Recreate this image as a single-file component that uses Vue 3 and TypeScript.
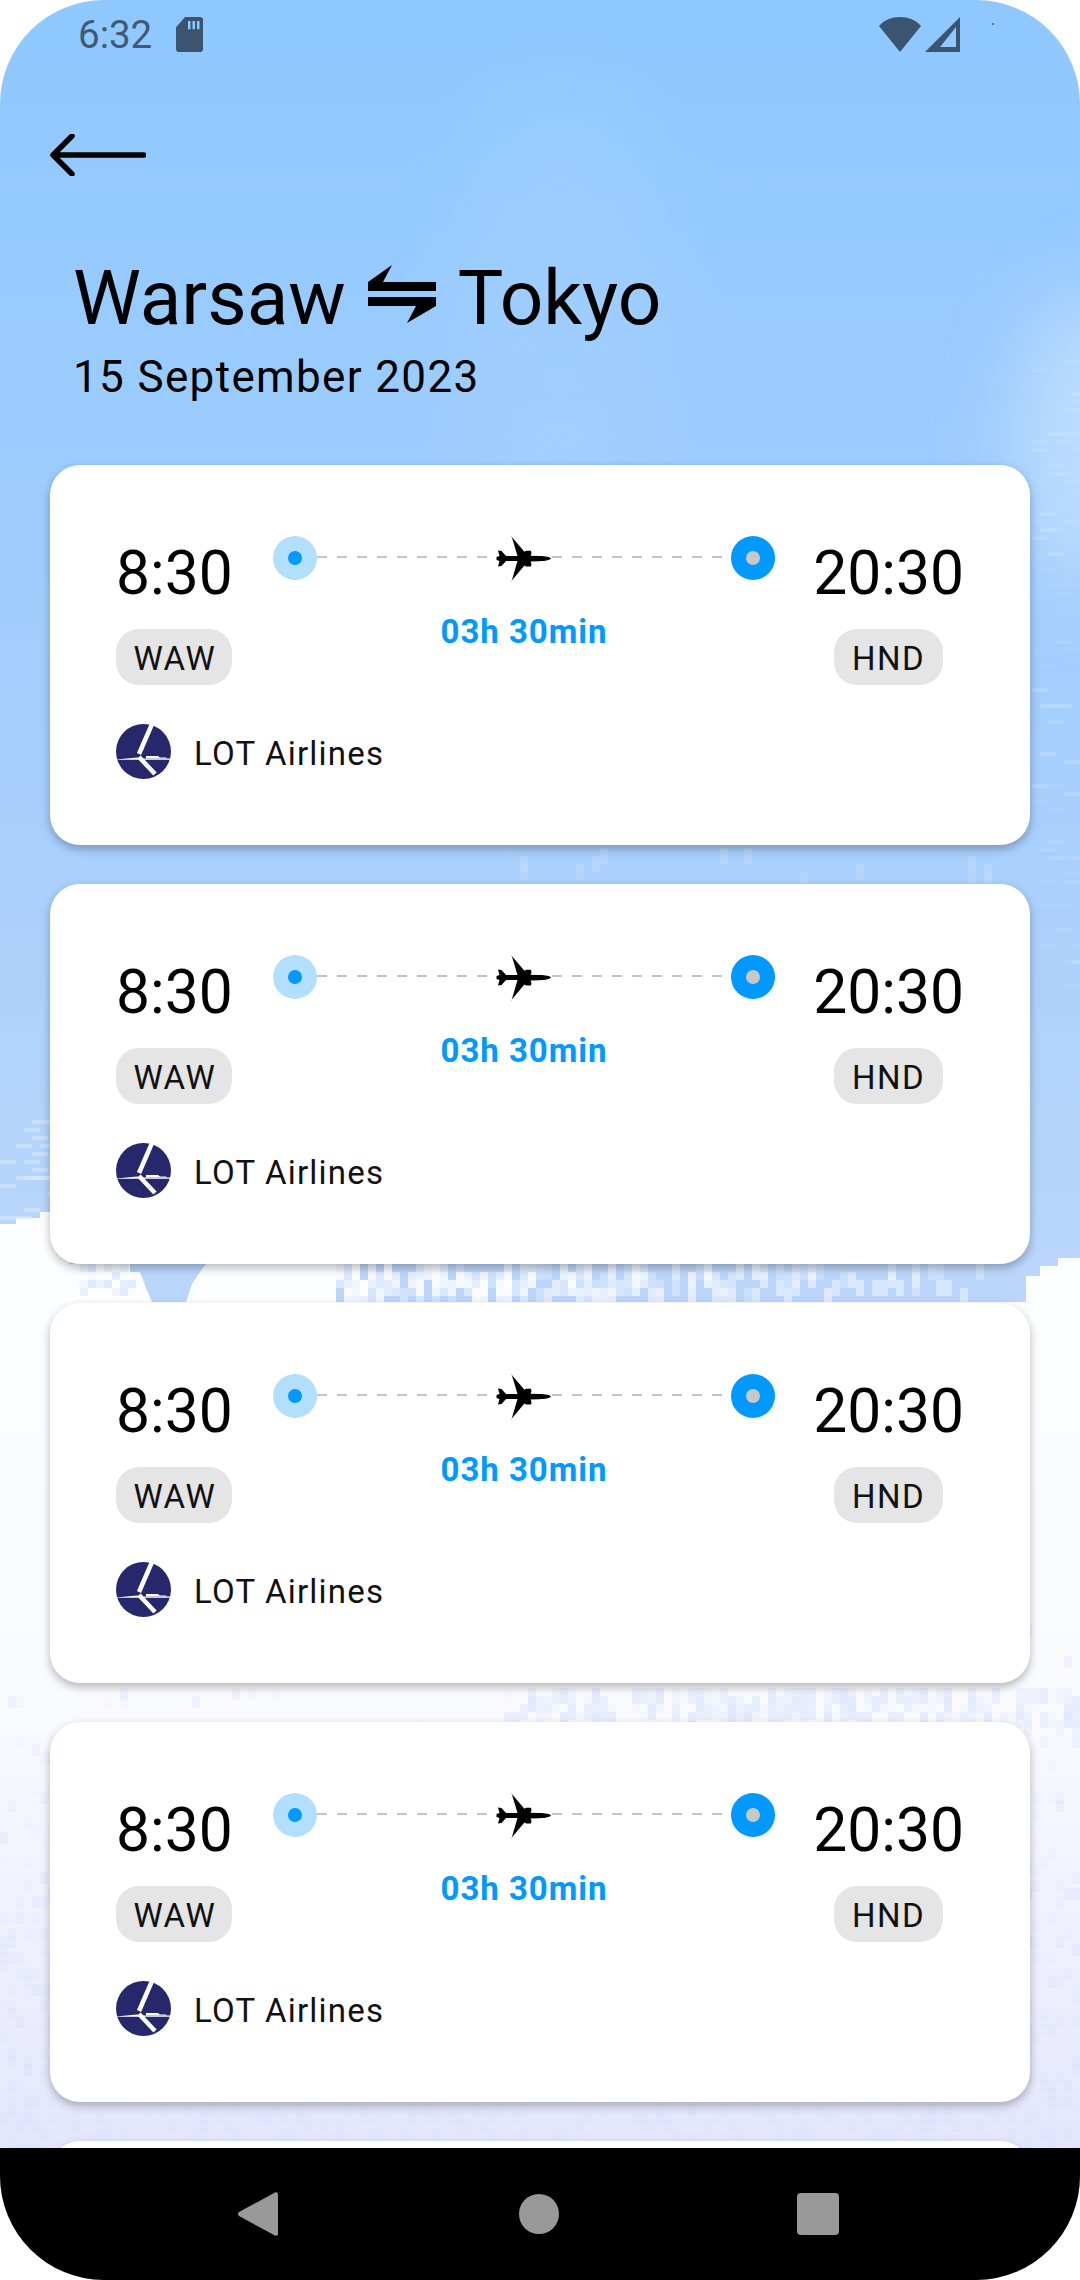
<template>
  <div class="phone">
    <svg class="sky" width="1080" height="2280" viewBox="0 0 1080 2280" aria-hidden="true">
      <defs>
        <linearGradient id="skyFill" x1="0" y1="0" x2="0" y2="1">
          <stop offset="0" stop-color="#8ec8ff" />
          <stop offset="0.36" stop-color="#a8cffc" />
          <stop offset="0.56" stop-color="#bad6fb" />
        </linearGradient>
        <linearGradient id="cloudFill" gradientUnits="userSpaceOnUse" x1="0" y1="1220" x2="0" y2="2150">
          <stop offset="0" stop-color="#fdfeff" />
          <stop offset="0.52" stop-color="#fafbff" />
          <stop offset="1" stop-color="#e4e7fd" />
        </linearGradient>
        <filter id="soft" x="-100%" y="-100%" width="300%" height="300%"><feGaussianBlur stdDeviation="40" /></filter>
      </defs>
      <rect width="1080" height="2280" fill="url(#skyFill)" />
      <ellipse cx="1090" cy="440" rx="70" ry="150" fill="#d4e8ff" opacity="0.6" filter="url(#soft)" />
      <ellipse cx="560" cy="300" rx="110" ry="220" fill="#b9dcff" opacity="0.18" filter="url(#soft)" />
      <polygon fill="url(#cloudFill)" points="0,1224 16,1224 16,1218 40,1218 40,1212 70,1212 70,1264 130,1264 130,1272 140,1272 146,1288 152,1302 186,1302 192,1284 200,1272 206,1264 1016,1264 1016,1302 1026,1302 1026,1276 1040,1276 1040,1266 1058,1266 1058,1258 1080,1258 1080,2280 0,2280" />
      <rect x="206" y="1264" width="814" height="38" fill="#bcd6fb" />
      <rect x="206" y="1264" width="130" height="38" fill="#fdfeff" />
      <rect v-for="(c, i) in cells" :key="i" :x="c.x" :y="c.y" :width="c.w" :height="c.h" :fill="c.fill" :opacity="c.o" />
    </svg>

    <main class="screen">
      <header class="status-bar">
        <div class="status-left">
          <span class="clock">6:32</span>
          <svg width="27" height="35" viewBox="0 0 27 34" preserveAspectRatio="none">
            <path fill="#3b546f" d="M9 0h15a3 3 0 0 1 3 3v28a3 3 0 0 1-3 3H3a3 3 0 0 1-3-3V10z" />
            <path fill="#8ec8ff" d="M12 4h2.5v8H12zM16.5 4H19v8h-2.5zM21 4h2.5v8H21z" />
          </svg>
        </div>
        <div class="status-right">
          <svg width="42" height="35" viewBox="0 0 42 35">
            <path fill="#3b546f" d="M21 35 0 9C5 3 13 0 21 0s16 3 21 9z" />
          </svg>
          <svg width="35" height="35" viewBox="0 0 35 35">
            <path fill="#3b546f" fill-rule="evenodd" d="M35 0v35H0zM31 10 15 30h16z" />
          </svg>
          <i class="tick"></i>
        </div>
      </header>

      <button class="back" type="button" aria-label="Back">
        <svg width="96" height="42" viewBox="0 0 96 42">
          <path d="M94 21H4M22 2 3 21l19 19" fill="none" stroke="#000" stroke-width="5.500" stroke-linecap="round" stroke-linejoin="round" />
        </svg>
      </button>

      <h1 class="title">
        <span>Warsaw</span>
        <svg class="swap" width="68" height="58" viewBox="0 0 68 58">
          <path d="M0 17 24 0 15 17H68V26H0zM68 41 39 58 48 41H0V32H68z" fill="#000" />
        </svg>
        <span>Tokyo</span>
      </h1>
      <p class="date">15 September 2023</p>

      <section class="list">
        <article v-for="f in flights" :key="f.id" class="card">
          <div class="route">
            <div class="stop">
              <div class="time">{{ f.depart }}</div>
              <div class="code">{{ f.from }}</div>
            </div>
            <div class="track">
              <div class="line">
                <span class="dot dot-start"><i></i></span>
                <span class="dash"></span>
                <svg class="plane" width="56" height="48" viewBox="15 15 56 48">
                  <path fill="#000" d="M70 38.5C69 37 65 36.2 58 36L49.5 35.7 50.5 33.5 50 30.8H45L43.4 31.8 30 16H30.5L36.5 36H25L20.5 31 17 30.500 18.500 36 15.500 37V40L18.500 41 17 46.500 20.500 46 25 41H36.500L30.500 61.500H30L43.400 45.500 45 46.500H50L50.500 44 49.500 41.500 58 41.200C65 41 69 40 70 38.500Z" />
                </svg>
                <span class="dash"></span>
                <span class="dot dot-end"><i></i></span>
              </div>
              <div class="duration">{{ f.duration }}</div>
            </div>
            <div class="stop">
              <div class="time">{{ f.arrive }}</div>
              <div class="code">{{ f.to }}</div>
            </div>
          </div>
          <div class="airline">
            <svg width="55" height="55" viewBox="0 0 55 55">
              <circle cx="27.500" cy="27.500" r="27.500" fill="#27276b" />
              <path d="M36 0 23 30" stroke="#fff" stroke-width="4.500" fill="none" />
              <path d="M23 33 39 50" stroke="#fff" stroke-width="4.500" fill="none" />
              <path d="M0 35.500 21 33.500 27 34.500H55V35.700H0z" fill="#fff" />
              <path d="M30 32H42L44 33.500H50L51 34.500H30z" fill="#fff" />
            </svg>
            <span>{{ f.airline }}</span>
          </div>
        </article>
      </section>
    </main>

    <nav class="nav-bar">
      <svg width="40" height="46" viewBox="0 0 40 46"><path fill="#999" d="M37 1.500 1 21a2.500 2.500 0 0 0 0 4L37 44.500c1.500.8 3-.2 3-2V3.500c0-1.800-1.500-2.800-3-2z" /></svg>
      <span class="nav-circle"></span>
      <span class="nav-square"></span>
    </nav>
  </div>
</template>

<script setup lang="ts">
interface Flight {
  id: number
  depart: string
  arrive: string
  from: string
  to: string
  duration: string
  airline: string
}

interface Cell {
  x: number
  y: number
  w: number
  h: number
  fill: string
  o: number
}

const flights: Flight[] = [1, 2, 3, 4, 5].map((id) => ({
  id,
  depart: '8:30',
  arrive: '20:30',
  from: 'WAW',
  to: 'HND',
  duration: '03h 30min',
  airline: 'LOT Airlines',
}))

// small seeded generator so the sky texture stays the same on every load
let seed = 7321
const rnd = () => {
  seed = (seed * 16807) % 2147483647
  return seed / 2147483647
}

const hiddenByCard = (x: number, y: number) => {
  if (x < 58 || x > 1016) return false
  return [465, 884, 1303, 1722, 2141].some((top) => y >= top - 8 && y < top + 380)
}

const cells: Cell[] = []
for (let y = 360; y < 2148; y += 8) {
  for (let x = 0; x < 1080; x += 8) {
    if (hiddenByCard(x, y)) continue
    const r = rnd()
    if (y < 1000 && x > 1024 && r < 0.16) {
      cells.push({ x, y, w: 16, h: 4, fill: '#cfe5ff', o: 0.4 * rnd() })
    } else if (y >= 845 && y < 884 && x > 480 && r < 0.05) {
      cells.push({ x, y, w: 8, h: 16, fill: '#cfe2ff', o: 0.3 })
    } else if (y >= 1120 && y < 1220 && x < 50 && r < 0.18) {
      cells.push({ x, y, w: 16, h: 4, fill: '#e6f0ff', o: 0.4 })
    } else if (y >= 1264 && y < 1302) {
      if (x >= 336 && x < 1016 && r < 0.75 - (x - 336) / 1100) {
        cells.push({ x, y, w: 8, h: 16, fill: '#ffffff', o: 0.2 + rnd() * (0.85 - (x - 336) / 950) })
      } else if (x >= 70 && x < 136 && r < 0.5) {
        cells.push({ x, y, w: 8, h: 8, fill: '#c8dcfb', o: 0.6 * rnd() })
      }
    } else if (y >= 1683 && y < 1722 && x > 500 && r < 0.6) {
      cells.push({ x, y, w: 8, h: 16, fill: '#dfe7fc', o: rnd() * 0.8 })
    } else if (y >= 1600 && r < (y - 1600) / 1400) {
      cells.push({ x, y, w: 8, h: 12, fill: '#d7ddfb', o: rnd() * 0.35 })
    }
  }
}
</script>

<style>
html,
body {
  margin: 0;
  background: #fff;
}
</style>

<style scoped>
.phone {
  position: relative;
  width: 1080px;
  height: 2280px;
  display: flex;
  flex-direction: column;
  border-radius: 104px;
  overflow: hidden;
  font-family: Roboto, "Liberation Sans", sans-serif;
  color: #000;
}

.sky {
  position: absolute;
  inset: 0;
}

.screen {
  position: relative;
  flex: 1;
  min-height: 0;
  overflow: hidden;
  display: flex;
  flex-direction: column;
}

.status-bar {
  height: 70px;
  flex: none;
  display: flex;
  justify-content: space-between;
  padding: 17px 86px 0 78px;
  box-sizing: border-box;
}

.status-left {
  display: flex;
  align-items: flex-start;
  gap: 24px;
}

.status-right {
  display: flex;
  gap: 4px;
  align-items: flex-start;
}

.tick {
  width: 2px;
  height: 2px;
  margin: 6px 0 0 28px;
  background: #3b546f;
  opacity: 0.7;
}

.clock {
  font-size: 38.500px;
  line-height: 36px;
  color: #3f5a76;
}

.back {
  align-self: flex-start;
  margin: 64px 0 0 50px;
  padding: 0;
  border: 0;
  background: none;
  line-height: 0;
}

.title {
  margin: 78px 0 0 73px;
  display: flex;
  align-items: center;
  gap: 22px;
  font-size: 76.500px;
  font-weight: 400;
  line-height: 88px;
}

.swap {
  margin-top: -8px;
}

.date {
  margin: 10px 0 0 73px;
  font-size: 44px;
  line-height: 50px;
  letter-spacing: 1.350px;
}

.list {
  margin-top: 63px;
  padding: 0 50px;
  display: flex;
  flex-direction: column;
  gap: 39px;
}

.card {
  flex: none;
  height: 380px;
  box-sizing: border-box;
  padding: 76px 66px 0;
  background: #fff;
  border-radius: 30px;
  box-shadow: 0 4px 10px rgba(0, 0, 0, 0.28);
}

.route {
  display: flex;
  justify-content: space-between;
  align-items: flex-start;
}

.stop {
  display: flex;
  flex-direction: column;
  align-items: center;
}

.time {
  font-size: 60.500px;
  line-height: 66px;
}

.code {
  margin-top: 22px;
  padding: 0 18px;
  height: 56px;
  border-radius: 23px;
  background: #e5e5e5;
  font-size: 33px;
  line-height: 59px;
  letter-spacing: 1.500px;
  color: #111;
}

.stop:first-child .code {
  padding: 0 16px 0 17px;
}

.track {
  flex: 1;
  margin: -5px 38px 0 40px;
  display: flex;
  flex-direction: column;
  align-items: center;
}

.line {
  width: 100%;
  display: flex;
  align-items: flex-start;
}

.dot {
  flex: none;
  width: 44px;
  height: 44px;
  border-radius: 50%;
  display: flex;
  align-items: center;
  justify-content: center;
}

.dot i {
  width: 14px;
  height: 14px;
  border-radius: 50%;
}

.dot-start {
  background: #b3dfff;
}

.dot-start i {
  background: #0099ff;
}

.dot-end {
  background: #0099ff;
}

.dot-end i {
  background: #c8c8c8;
}

.dash {
  flex: 1;
  height: 2px;
  margin-top: 20px;
  background: repeating-linear-gradient(90deg, #c4c4c4 0 10px, transparent 10px 20px);
}

.plane {
  flex: none;
  margin-top: -1px;
}

.duration {
  margin-top: 29px;
  font-size: 33px;
  line-height: 40px;
  font-weight: 700;
  letter-spacing: 0.950px;
  color: #0099ff;
}

.airline {
  margin-top: 39px;
  display: flex;
  align-items: center;
  gap: 23px;
  font-size: 33px;
  line-height: 55px;
  letter-spacing: 1.200px;
  color: #111;
}

.airline svg {
  margin-bottom: 4px;
}

.nav-bar {
  position: relative;
  flex: none;
  height: 132px;
  background: #000;
  display: grid;
  grid-template-columns: 42px 40px 42px;
  justify-content: space-between;
  align-items: center;
  padding: 0 241px 0 238px;
  box-sizing: border-box;
}

.nav-circle {
  width: 40px;
  height: 40px;
  border-radius: 50%;
  background: #999;
}

.nav-square {
  width: 42px;
  height: 42px;
  border-radius: 4px;
  background: #999;
}
</style>
